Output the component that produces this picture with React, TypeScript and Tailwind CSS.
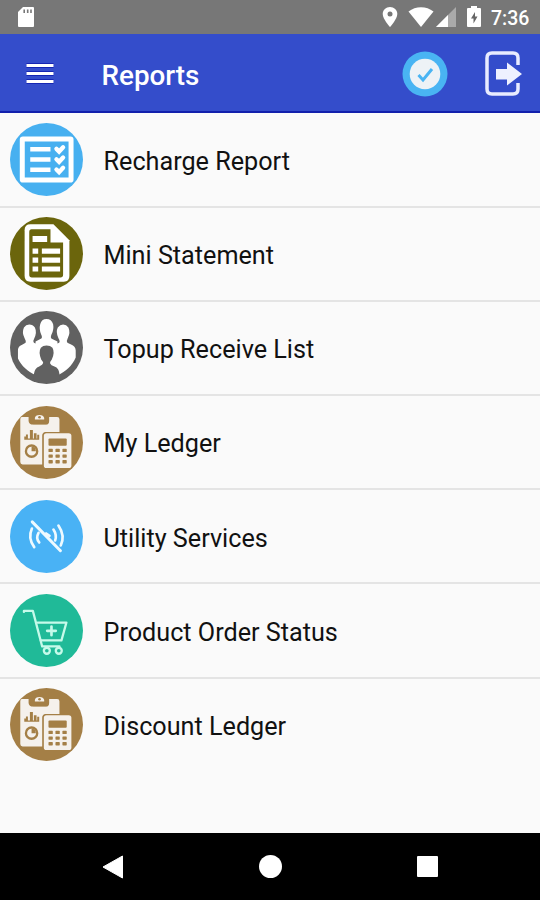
import type { ReactNode } from "react";

type Report = {
  label: string;
  color: string;
  icon: ReactNode;
};

const ledgerIcon = (
  <>
    <path
      d="M36 33H56V45Q57 56 70 56H108Q118 56 118 45V33H142Q149 33 149 40V78H107Q97 79 97 90V176H38Q31 176 31 169V40Q31 33 36 33Z"
      fill="#f5f1ec"
    />
    <path d="M62 42H75Q76 27 89 27Q102 27 103 42H117Q116 55 108 55H71Q62 54 62 42Z" fill="#a47f46" />
    <path d="M75 41V36Q76 27 89 27Q101 27 103 36V41Z" fill="#f5f1ec" />
    <circle cx="89" cy="34" r="4" fill="#a47f46" />
    <path d="M43 92H48V86H54V98H60V72H69V98H72V82H80V98H82V87H88V102H43Z" fill="#a47f46" />
    <circle cx="65" cy="136" r="17" fill="none" stroke="#a47f46" strokeWidth="7" />
    <path d="M65 123V136H78Q78 123 65 123Z" fill="#a47f46" />
    <rect x="102" y="82" width="83" height="105" rx="8" fill="#f5f1ec" />
    <rect x="116" y="98" width="55" height="22" rx="3" fill="#a47f46" />
    {[129, 146, 163].map((y) =>
      [116, 137, 158].map((x) => (
        <rect key={`${x}-${y}`} x={x} y={y} width="13" height="10" rx="2" fill="#a47f46" />
      ))
    )}
  </>
);

const reports: Report[] = [
  {
    label: "Recharge Report",
    color: "#47b0f0",
    icon: (
      <g fill="none" stroke="#fff">
        <rect x="37" y="48" width="147" height="124" rx="2" strokeWidth="15" />
        <path d="M61 79H122M61 110H122M61 141H122" strokeWidth="14" />
        <path d="M140 78L148 86L160 73M140 109L148 117L160 104M140 140L148 148L160 135" strokeWidth="13" strokeLinecap="round" />
      </g>
    ),
  },
  {
    label: "Mini Statement",
    color: "#6b650c",
    icon: (
      <>
        <path d="M62 22H131L179 70V178Q179 195 162 195H61Q44 195 44 178V40Q44 22 62 22Z" fill="#fff" />
        <path d="M65 37H122V77H160V174Q160 182 152 182H66Q58 182 58 174V45Q58 37 65 37Z" fill="#6b650c" />
        <path d="M68 57H112V75H68ZM68 95H85V111H68ZM68 122H85V138H68ZM68 149H85V164H68ZM96 95H151V111H96ZM96 122H151V138H96ZM96 149H151V164H96Z" fill="#fff" />
      </>
    ),
  },
  {
    label: "Topup Receive List",
    color: "#616161",
    icon: (
      <>
        <path
          d="M75 192C55 184 34 165 24 143V116Q25 106 38 101L47 96Q49 90 44 82Q35 66 42 50Q48 41 58 41Q69 41 75 50Q82 65 73 83Q68 91 72 96L77 98V92L93 84Q99 81 94 71Q87 55 91 40Q95 24 110 24Q125 24 130 40Q133 56 125 71Q121 81 126 84L143 92V98L148 96Q152 91 146 82Q137 64 144 50Q151 41 160 41Q170 41 176 50Q183 66 174 82Q169 91 173 96L184 101Q197 106 198 118V140C188 165 165 184 147 192Z"
          fill="#fff"
        />
        <path
          d="M72 214V190Q74 172 88 167Q99 163 100 157Q100 153 94 146Q85 124 93 111Q99 104 110 104Q122 104 128 111Q136 126 126 146Q120 153 121 158Q123 164 134 167Q148 172 149 190V214Z"
          fill="#616161"
        />
      </>
    ),
  },
  { label: "My Ledger", color: "#a47f46", icon: ledgerIcon },
  {
    label: "Utility Services",
    color: "#49b2f5",
    icon: (
      <g fill="none" stroke="#eefaff" strokeWidth="8" strokeLinecap="round">
        <path d="M67 66L152 153" strokeWidth="9" />
        <path d="M66 86Q53 115 73 142M86 99Q77 115 88 128" />
        <path d="M146 77Q167 108 153 137M131 89Q142 106 136 122M109 101L119 108" />
      </g>
    ),
  },
  {
    label: "Product Order Status",
    color: "#20ba98",
    icon: (
      <g fill="none" stroke="#c6faea" strokeWidth="7" strokeLinecap="round" strokeLinejoin="round">
        <path d="M42 54V51H69L97 158H149" />
        <path d="M83 86H170L155 140H93" />
        <path d="M125 98V124M112 111H138" strokeWidth="8" />
        <circle cx="111" cy="171" r="9" />
        <circle cx="147" cy="171" r="9" />
      </g>
    ),
  },
  { label: "Discount Ledger", color: "#a47f46", icon: ledgerIcon },
];

function StatusBar() {
  return (
    <div className="flex h-[34px] shrink-0 items-center bg-[#777777] pr-[11px] pl-[17px] text-white">
      <svg className="h-[22px] w-[18px]" viewBox="0 0 18 22">
        <path d="M6 1H16Q17 1 17 2V20Q17 21 16 21H2Q1 21 1 20V6Z" fill="#fff" />
        <path d="M7.2 3.5V7M10.7 3.5V7M14 3.5V7" stroke="#777" strokeWidth="1.6" />
      </svg>
      <svg className="ml-auto h-[22px] w-[16px]" viewBox="0 0 16 22">
        <path d="M8 1C12 1 15.3 4 15.3 8C15.3 13 8 21 8 21S.7 13 .7 8C.7 4 4 1 8 1Z" fill="#fff" />
        <circle cx="8" cy="8" r="2.5" fill="#777" />
      </svg>
      <svg className="ml-[10px] h-[22px] w-[26px]" viewBox="0 0 26 22">
        <path d="M.5 5.5Q6 1.2 13 1.2T25.5 5.5L13 21Z" fill="#fff" />
      </svg>
      <svg className="ml-[2px] h-[22px] w-[20px]" viewBox="0 0 20 22">
        <path d="M20 1V21H0Z" fill="#aaa" />
        <path d="M12 9V21H0Z" fill="#fff" />
      </svg>
      <svg className="ml-[10px] h-[22px] w-[16px]" viewBox="0 0 16 22">
        <path d="M5 0H11V2H14Q15 2 15 3V20Q15 21 14 21H2Q1 21 1 20V3Q1 2 2 2H5Z" fill="#fff" />
        <path d="M9 6L5 12.5H7.5V17.5L11.5 10.5H9Z" fill="#666" />
      </svg>
      <span className="mt-[3px] ml-[9px] w-[38px] text-[19.5px] leading-none font-medium whitespace-nowrap">7:36</span>
    </div>
  );
}

function AppBar() {
  return (
    <header className="flex h-[79px] shrink-0 items-center border-b-2 border-[#111fac] bg-[#344dcb] pt-[2px] pr-[17px] pl-[26px]">
      <svg className="h-[22px] w-[28px]" viewBox="0 0 28 22">
        <path d="M.5 2.5H27.5M.5 10.5H27.5M.5 18.5H27.5" stroke="#1526b4" strokeWidth="5" />
        <path d="M.5 2.5H27.5M.5 10.5H27.5M.5 18.5H27.5" stroke="#fff" strokeWidth="3" />
      </svg>
      <h1 className="mt-[5px] ml-[47.5px] text-[27.8px] leading-none font-medium text-white">Reports</h1>
      <svg className="ml-auto h-[46px] w-[46px]" viewBox="0 0 46 46">
        <circle cx="23" cy="23" r="22.5" fill="#49b4f3" />
        <circle cx="23" cy="23" r="15.3" fill="#edf2f6" />
        <path d="M16.5 24L21 29L30 18" fill="none" stroke="#49b4f3" strokeWidth="3" />
      </svg>
      <svg className="ml-[37px] h-[46px] w-[38px]" viewBox="0 0 38 46">
        <path d="M33 14V7Q33 2 28 2H7Q2 2 2 7V38Q2 43 7 43H28Q33 43 33 38V32" fill="none" stroke="#e8ecff" strokeWidth="3.5" />
        <path d="M11 18H22V11.5L37 23L22 34.5V28.5H11Z" fill="#eef1ff" />
      </svg>
    </header>
  );
}

function ReportRow({ label, color, icon }: Report) {
  return (
    <li className="flex h-[94.2px] items-center border-b-2 border-[#e4e4e4] pl-[10px] last:border-transparent">
      <svg className="h-[73px] w-[73px] shrink-0" viewBox="0 0 220 220">
        <circle cx="110" cy="110" r="110" fill={color} />
        {icon}
      </svg>
      <span className="mt-[4px] ml-[20.5px] text-[25.2px] leading-none text-[#111]">{label}</span>
    </li>
  );
}

export default function App() {
  return (
    <div className="flex h-[900px] w-[540px] flex-col overflow-hidden bg-[#fafafa] font-['Roboto',sans-serif]">
      <StatusBar />
      <AppBar />
      <ul className="flex-1 pt-[0.4px]">
        {reports.map((report) => (
          <ReportRow key={report.label} {...report} />
        ))}
      </ul>
      <nav className="flex h-[67px] shrink-0 items-center justify-between bg-black px-[102px]">
        <svg className="h-6 w-[22px]" viewBox="0 0 22 24">
          <path d="M20.5 1V23L1 12Z" fill="#fff" stroke="#fff" strokeLinejoin="round" />
        </svg>
        <span className="size-[23px] rounded-full bg-white" />
        <span className="size-[21px] rounded-[1px] bg-white" />
      </nav>
    </div>
  );
}
